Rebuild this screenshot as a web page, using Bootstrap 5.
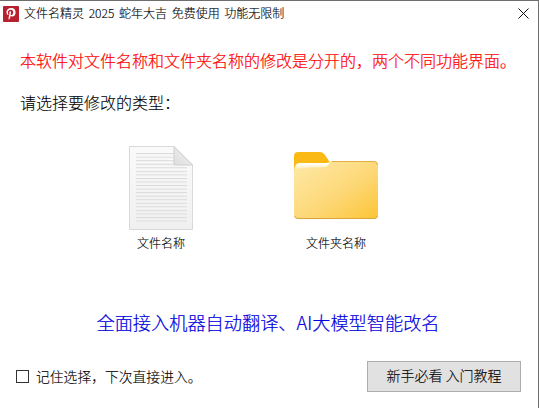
<!DOCTYPE html>
<html lang="zh-CN">
<head>
  <meta charset="UTF-8">
  <title>文件名精灵</title>
  <link href="https://cdn.jsdelivr.net/npm/bootstrap@5.3.0/dist/css/bootstrap.min.css" rel="stylesheet">
  <style>
    html, body { height: 100%; }
    body {
      background: #fff;
      color: #000;
      font-family: "Noto Sans CJK SC", sans-serif;
      font-weight: 300;
      -webkit-text-stroke: .12px currentColor;
    }
    .app-window {
      height: 408px;
      border-top: 1px solid #6e6e6e;
      border-right: 1px solid #6e6e6e;
    }
    .title-bar { height: 26px; padding-left: 3px; }
    .title-text { font-size: 12px; line-height: 24px; margin: 0 0 2px 5px; color: #000; word-spacing: 2px; }
    .close-btn { width: 30px; height: 25px; padding: 0; background: none; border: 0; }
    .notice { color: #f00; font-size: 16px; line-height: 24px; margin: 21px 0 0 20px; -webkit-text-stroke-width: .2px; }
    .prompt { font-size: 16px; line-height: 24px; margin: 18px 0 0 20px; }
    .choice-row { margin: 30px 0 0 129px; gap: 101px; height: 110px; }
    .choice { display: block; background: none; border: 0; padding: 0; }
    .choice-label { font-size: 12px; line-height: 18px; color: #000; font-weight: 300; }
    .promo { color: #0000e0; font-size: 18.2px; line-height: 26px; margin-top: 55px; padding-right: 2px; -webkit-text-stroke-width: .2px; }
    .foot-row { margin-top: 26px; padding: 0 17px 0 16px; }
    .tick { width: 13px; height: 13px; border: 1px solid #333; margin-right: 7px; }
    .tick-label { font-size: 13.8px; color: #000; }
    .guide-btn {
      width: 154px; height: 31px; padding: 0 0 2px;
      background: #e1e1e1; border: 1px solid #adadad; border-radius: 0;
      font-size: 14px; color: #000; font-weight: 300;
    }
  </style>
</head>
<body>
  <div class="app-window d-flex flex-column">
    <div class="title-bar d-flex align-items-center">
      <svg width="16" height="16" viewBox="0 0 16 16">
        <rect width="16" height="16" rx="1" fill="#b8202f"/>
        <path d="M8.300 2C5.200 2 3.400 4 3.400 6.300c0 1.100.5 2.300 1.500 2.600.4.100.6-.5.6-.8 0-.4-.7-.7-.7-1.700 0-1.500 1.300-2.600 3-2.600 1.500 0 2.400.9 2.400 2.300 0 1.700-.7 3-1.700 3-.6 0-1-.5-.9-1.100.2-.7.5-1.400.5-1.900 0-1.300-1.800-1.100-1.800.5 0 .5.2.8.2.8l-.8 3.500c-.2.8 0 2.300 0 2.800l.2.100c.4-.5 1.100-1.600 1.300-2.300l.4-1.700c.2.400.8.800 1.500.8 2.100 0 3.500-1.900 3.500-4.200C12.600 3.500 10.900 2 8.300 2z" fill="#fff"/>
      </svg>
      <span class="title-text">文件名精灵 2025 蛇年大吉 免费使用 功能无限制</span>
      <button class="close-btn ms-auto align-self-start d-flex align-items-center justify-content-center" type="button" aria-label="关闭">
        <svg width="11" height="11" viewBox="0 0 11 11"><path d="M.5.5l10 10M10.500.5l-10 10" stroke="#111" stroke-width="1" fill="none"/></svg>
      </button>
    </div>

    <div class="notice">本软件对文件名称和文件夹名称的修改是分开的&#xFF0C;两个不同功能界面。</div>
    <div class="prompt">请选择要修改的类型&#xFF1A;</div>

    <div class="choice-row d-flex">
      <button class="choice text-center" type="button">
        <svg class="d-block" width="64" height="84" viewBox="0 0 64 84">
          <defs>
            <linearGradient id="pg" x1="0" y1="0" x2="0" y2="1"><stop offset="0" stop-color="#fafafa"/><stop offset="1" stop-color="#f0f0f0"/></linearGradient>
            <linearGradient id="fold" x1="0" y1="1" x2="1" y2="0"><stop offset="0" stop-color="#dedede"/><stop offset="1" stop-color="#f2f2f2"/></linearGradient>
            <pattern id="ln" width="64" height="3.55" patternUnits="userSpaceOnUse"><rect width="64" height="1" fill="#dadada"/></pattern>
          </defs>
          <path d="M.5.5H45L63.500 19V83.500H.5z" fill="url(#pg)" stroke="#d9d9d9"/>
          <rect x="7" y="7" width="38" height="13" fill="url(#ln)"/>
          <rect x="7" y="21" width="51" height="57" fill="url(#ln)"/>
          <path d="M45 .5V19H63.500z" fill="url(#fold)" stroke="#cfcfcf"/>
        </svg>
        <div class="choice-label mt-1">文件名称</div>
      </button>
      <button class="choice text-center" type="button">
        <svg class="d-block" width="84" height="84" viewBox="0 0 84 84">
          <defs>
            <linearGradient id="fg" x1="0" y1="0" x2="1" y2="1"><stop offset="0" stop-color="#fee9a8"/><stop offset=".55" stop-color="#fdd878"/><stop offset="1" stop-color="#fcc536"/></linearGradient>
            <linearGradient id="hl" x1="0" y1="0" x2="0" y2="1"><stop offset="0" stop-color="#fff"/><stop offset="1" stop-color="#ffedba"/></linearGradient>
          </defs>
          <g transform="translate(0 6)">
            <path d="M0 4a4 4 0 0 1 4-4H26q3 0 5 3l4 6v14H0z" fill="#fbb916"/>
            <path d="M0 20Q0 12 5 11H33L38 9H80a4 4 0 0 1 4 4V63a4 4 0 0 1-4 4H4a4 4 0 0 1-4-4z" fill="url(#fg)"/>
            <path d="M.5 64q1 2.500 3.500 2.500H80q2.500 0 3.500-2.500" stroke="#d9a43a" fill="none"/>
            <path d="M38 9.500H80a3.500 3.500 0 0 1 3.500 3.500" stroke="#e2ae45" fill="none"/>
            <path d="M1 17Q1 12 5 11H36L32 15Q14 15 1 17z" fill="url(#hl)"/>
          </g>
        </svg>
        <div class="choice-label mt-1">文件夹名称</div>
      </button>
    </div>

    <div class="promo text-center">全面接入机器自动翻译、AI大模型智能改名</div>

    <div class="foot-row d-flex align-items-center justify-content-between">
      <label class="d-flex align-items-center">
        <span class="tick"></span>
        <span class="tick-label">记住选择&#xFF0C;下次直接进入。</span>
      </label>
      <button class="guide-btn" type="button">新手必看 入门教程</button>
    </div>
  </div>
  <script src="https://cdn.jsdelivr.net/npm/bootstrap@5.3.0/dist/js/bootstrap.bundle.min.js"></script>
</body>
</html>
